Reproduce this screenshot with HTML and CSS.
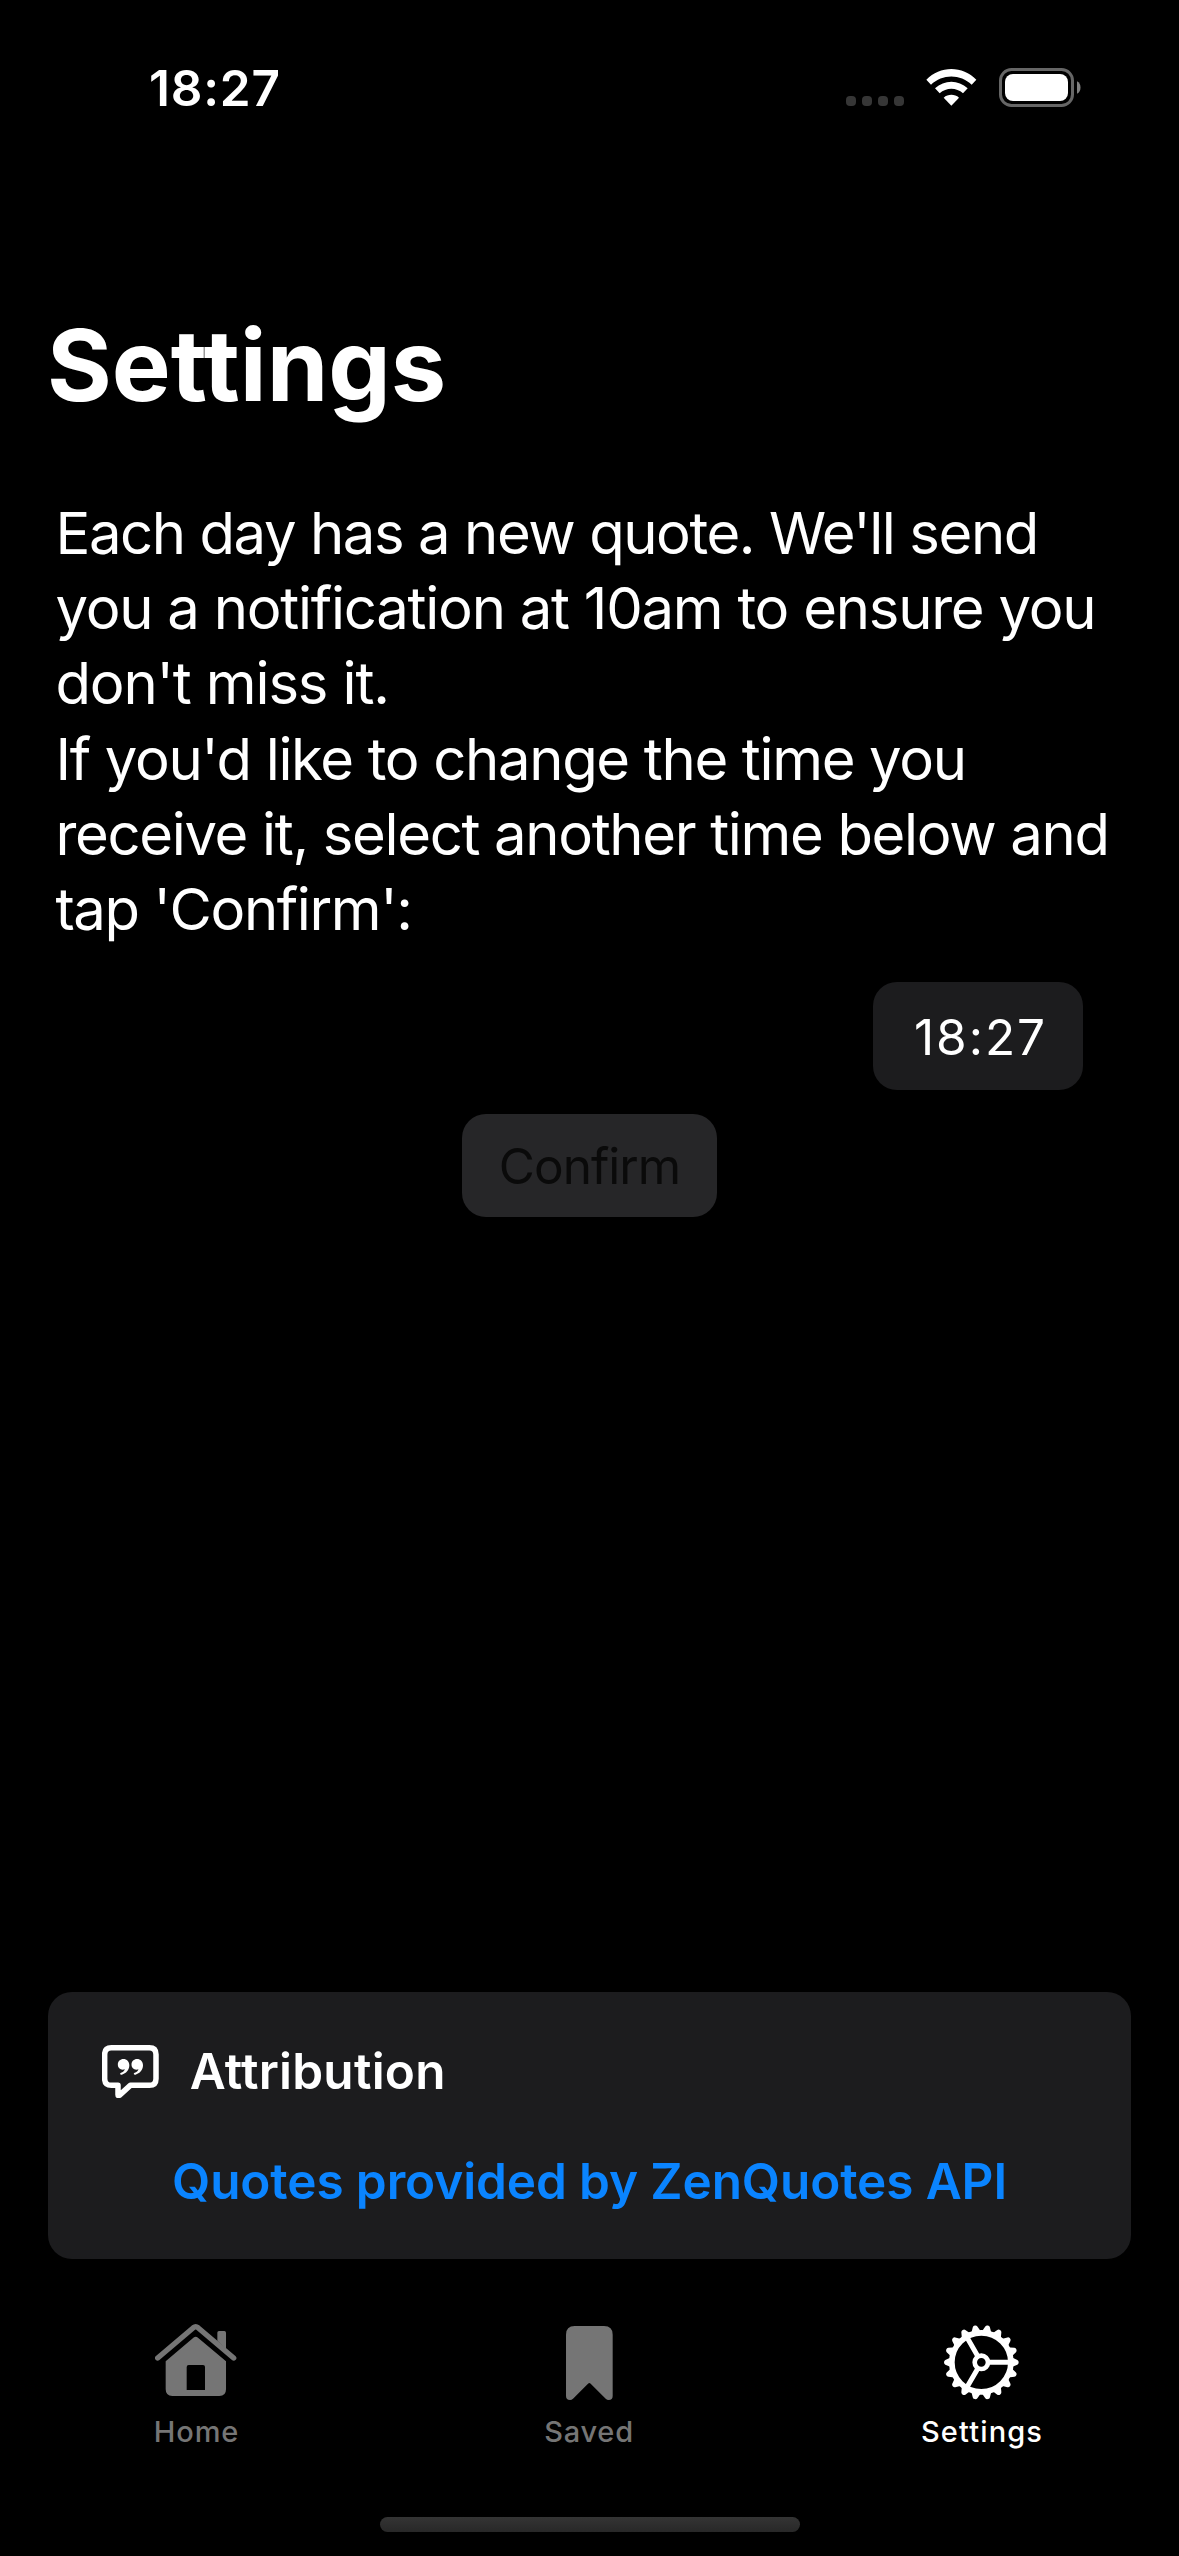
FILE: index.html
```
<!DOCTYPE html>
<html lang="en">
<head>
<meta charset="utf-8">
<title>Settings</title>
<link rel="stylesheet" href="styles.css">
</head>
<body>
<div class="screen">
  <header class="status">
    <span class="status-time">18:27</span>
    <div class="status-icons">
      <div class="signal"><i></i><i></i><i></i><i></i></div>
      <svg class="wifi" viewBox="0 0 152 111">
        <path d="M1 32 C42 -10.500 110 -10.500 151 32 L137 47 C103 14 49 14 15 47Z"/>
        <path d="M27 58 C55 32 97 32 125 58 L111 73 C91 55 61 55 41 73Z"/>
        <path d="M53 86 C66 74.500 86 74.500 99 86 L76 110Z"/>
      </svg>
      <svg class="battery" viewBox="0 0 82 39">
        <rect x="1.500" y="1.500" width="72" height="36" rx="11" fill="none" stroke="#666" stroke-width="3"/>
        <rect x="6" y="6" width="63" height="27" rx="8" fill="#fff"/>
        <path d="M78 13.200 C82.700 15 82.700 24 78 25.800Z" fill="#808080"/>
      </svg>
    </div>
  </header>

  <main class="content">
    <h1 class="title">Settings</h1>
    <p class="copy">
      <span class="line line-1">Each day has a new quote. We'll send</span>
      <span class="line line-2">you a notification at 10am to ensure you</span>
      <span class="line line-3">don't miss it.</span>
    </p>
    <p class="copy">
      <span class="line line-4">If you'd like to change the time you</span>
      <span class="line line-5">receive it, select another time below and</span>
      <span class="line line-6">tap 'Confirm':</span>
    </p>
    <button class="time-picker" type="button">18:27</button>
    <button class="confirm" type="button" disabled>Confirm</button>
  </main>

  <section class="card">
    <div class="card-head">
      <svg class="bubble" viewBox="36 44 171 161">
        <path d="M64 52.500 H178 Q198 52.500 198 72.500 V145 Q198 165 178 165 H121 L88 195 Q84 198 84 193 V165 H64 Q44 165 44 145 V72.500 Q44 52.500 64 52.500Z" fill="none" stroke="#fff" stroke-width="16.500" stroke-linejoin="round"/>
        <path id="quote" d="M100 86 C91 86 83.500 93 83.500 102.500 C83.500 112 90 118 98 118 C100.500 118 102.500 117.500 104.500 116.500 C102.500 121.500 98.500 125 93 127 C88.500 129 90 134 95.500 133 C108 130 118 119 118 105 C118 94 110.500 86 100 86Z" fill="#fff"/>
        <use href="#quote" x="41"/>
      </svg>
      <h2 class="card-title">Attribution</h2>
    </div>
    <a class="card-link">Quotes provided by ZenQuotes API</a>
  </section>

  <nav class="tabs">
    <div class="tab">
      <div class="tab-icon">
        <svg class="icon-home" viewBox="75 42 245 216">
          <path d="M83 144 L190 53 Q197 47.500 204 53 L311 144" fill="none" stroke="currentColor" stroke-width="16" stroke-linecap="round" stroke-linejoin="round"/>
          <path d="M262 92 V68 Q262 63 267 63 H283 Q288 63 288 68 V118Z"/>
          <path fill-rule="evenodd" d="M107 154 L191 82.500 Q197 78.500 203 82.500 L288 154 V238 Q288 258 268 258 H127 Q107 258 107 238Z M176 165 Q170 165 170 171 V240 H225 V171 Q225 165 219 165Z"/>
        </svg>
      </div>
      <span class="tab-label label-home">Home</span>
    </div>
    <div class="tab">
      <div class="tab-icon">
        <svg class="icon-saved" viewBox="108 48 140 222">
          <path d="M134 48 H222 Q248 48 248 74 V258 Q248 270 236 270 Q231 270 227 266 L182 221 Q178 217 174 221 L129 266 Q125 270 120 270 Q108 270 108 258 V74 Q108 48 134 48Z"/>
        </svg>
      </div>
      <span class="tab-label label-saved">Saved</span>
    </div>
    <div class="tab tab-active">
      <div class="tab-icon">
        <svg class="icon-gear" viewBox="-112 -112 224 224">
          <defs><path id="tooth" d="M92 -15 L97 -12 L108 -7 Q112 -5 112 0 Q112 5 108 7 L97 12 L92 15Z"/></defs>
          <circle r="88.500" fill="none" stroke="currentColor" stroke-width="17"/>
          <use href="#tooth"/><use href="#tooth" transform="rotate(20)"/><use href="#tooth" transform="rotate(40)"/>
          <use href="#tooth" transform="rotate(60)"/><use href="#tooth" transform="rotate(80)"/><use href="#tooth" transform="rotate(100)"/>
          <use href="#tooth" transform="rotate(120)"/><use href="#tooth" transform="rotate(140)"/><use href="#tooth" transform="rotate(160)"/>
          <use href="#tooth" transform="rotate(180)"/><use href="#tooth" transform="rotate(200)"/><use href="#tooth" transform="rotate(220)"/>
          <use href="#tooth" transform="rotate(240)"/><use href="#tooth" transform="rotate(260)"/><use href="#tooth" transform="rotate(280)"/>
          <use href="#tooth" transform="rotate(300)"/><use href="#tooth" transform="rotate(320)"/><use href="#tooth" transform="rotate(340)"/>
          <circle r="20" fill="none" stroke="currentColor" stroke-width="14"/>
          <path d="M22 0 H84 M-11 19 L-42 72.700 M-11 -19 L-42 -72.700" fill="none" stroke="currentColor" stroke-width="15"/>
        </svg>
      </div>
      <span class="tab-label label-settings">Settings</span>
    </div>
  </nav>
  <div class="home-indicator"></div>
</div>
</body>
</html>
```
FILE: styles.css
```
* { box-sizing: border-box; }

body {
  margin: 0;
  background: #000;
  color: #fff;
  font-family: Inter, "Liberation Sans", sans-serif;
}

h1, h2, p { margin: 0; }

svg { display: block; fill: currentColor; }

.screen {
  display: flex;
  flex-direction: column;
  width: 1179px;
  height: 2556px;
  overflow: hidden;
}

/* Status bar */
.status {
  display: flex;
  justify-content: space-between;
  align-items: flex-start;
  height: 177px;
  padding: 57.7px 98px 0 149px;
}

.status-time {
  font-size: 49.5px;
  font-weight: 600;
  line-height: 60px;
  letter-spacing: 0.8px;
}

.status-icons {
  display: flex;
  align-items: flex-end;
  height: 49.3px;
}

.signal { display: flex; gap: 6px; margin: 0 22px 1px 0; }

.signal i {
  width: 10px;
  height: 10px;
  border-radius: 4px;
  background: #363636;
}

.wifi { width: 50.7px; height: 37px; margin: 0 22.3px 1px 0; }

.battery { width: 82px; height: 39px; }

/* Main content */
.content {
  display: flex;
  flex-direction: column;
  height: 1815px;
  padding: 127.7px 48px 0;
}

.title {
  margin: 0 0 71.3px -1px;
  font-size: 99px;
  font-weight: 700;
  line-height: 120px;
}

.copy {
  margin: 0 0 1.3px 7.5px;
  font-size: 58px;
  line-height: 75px;
}

.line { display: block; white-space: nowrap; }
.line-1 { letter-spacing: -1.43px; }
.line-2 { letter-spacing: -1.25px; }
.line-3 { letter-spacing: -1.15px; }
.line-4 { letter-spacing: -1.34px; }
.line-5 { letter-spacing: -1.34px; }
.line-6 { letter-spacing: -1.4px; }

.time-picker,
.confirm {
  border: 0;
  border-radius: 24px;
  color: #fff;
  font-family: inherit;
  font-size: 49.5px;
  line-height: 60px;
}

.time-picker {
  align-self: flex-end;
  width: 210px;
  height: 108px;
  margin: 33.4px 48px 24px 0;
  padding: 2px 0 0 5px;
  background: #1c1c1e;
  letter-spacing: 2px;
}

.confirm {
  align-self: center;
  width: 255px;
  height: 103px;
  padding: 1px 0 0;
  background: #262628;
  color: #0a0a0a;
  letter-spacing: -0.97px;
}

/* Attribution card */
.card {
  height: 267px;
  margin: 0 48px;
  padding: 49px 54px 0;
  border-radius: 24px;
  background: #1c1c1e;
}

.card-head { display: flex; gap: 30.7px; }

.bubble { width: 57px; height: 53.7px; margin-top: 3.7px; }

.card-title {
  font-size: 49.5px;
  font-weight: 600;
  line-height: 60px;
  letter-spacing: 0.25px;
}

.card-link {
  display: block;
  margin-top: 50px;
  color: #0a84ff;
  font-size: 49.5px;
  font-weight: 600;
  line-height: 60px;
  letter-spacing: -0.11px;
  text-align: center;
}

/* Tab bar */
.tabs {
  display: grid;
  grid-template-columns: repeat(3, 1fr);
  height: 258px;
  padding-top: 65px;
}

.tab {
  display: flex;
  flex-direction: column;
  align-items: center;
  color: #757575;
}

.tab-active { color: #fff; }

.tab-icon { height: 89.5px; }

.icon-home { width: 81.7px; height: 72px; margin-right: 1.4px; }
.icon-saved { width: 46.7px; height: 74px; margin-top: 2px; }
.icon-gear { width: 74.7px; height: 74.7px; margin: 1.4px 2px 0 0; }

.tab-label { font-size: 29px; font-weight: 500; line-height: 36px; }
.label-home { letter-spacing: 0.9px; }
.label-saved { margin-right: 1px; letter-spacing: 0.78px; }
.label-settings { margin-right: 1px; letter-spacing: 1.15px; }

.home-indicator {
  align-self: center;
  width: 420px;
  height: 15px;
  border-radius: 8px;
  background: linear-gradient(#343434, #282828);
}
```
